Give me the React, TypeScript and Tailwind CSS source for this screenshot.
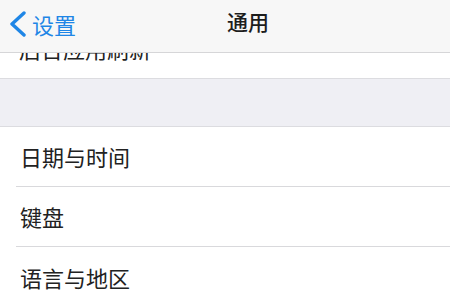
const FONT = { fontFamily: '"Noto Sans CJK SC", "Noto Sans", sans-serif' };

const rows = ["日期与时间", "键盘", "语言与地区"];

export default function App() {
  return (
    <div
      className="relative w-[450px] h-[300px] overflow-hidden bg-[#efeff4] text-[#222]"
      style={FONT}
    >
      {/* nav bar overlays the scrolled list */}
      <div className="absolute inset-x-0 top-0 z-10 h-[53px] bg-[#f7f7f7] border-b border-[#d6d6d8] flex items-center pb-[5px]">
        <div className="flex items-center pl-[8px] text-[#1f86e6]">
          <svg width="20" height="26" viewBox="0 0 20 26" fill="none">
            <polyline
              points="16,2 4,13 16,24"
              stroke="currentColor"
              strokeWidth="3.4"
              strokeLinecap="round"
              strokeLinejoin="round"
            />
          </svg>
          <span className="ml-[4px] text-[22px] leading-none">设置</span>
        </div>
        <div className="absolute left-[227px] top-[11px] text-[21px] font-medium leading-none text-[#1d1d1d]">
          通用
        </div>
      </div>

      <div className="flex flex-col">
        <div className="mt-[19px] h-[60px] bg-white flex items-center pl-[19px] text-[22px] border-b border-[#dcdce0]">
          后台应用刷新
        </div>
        <div className="h-[47px]" />
        <div className="bg-white border-t border-[#dcdce0]">
          {rows.map((r, i) => (
            <div key={r} className="pl-[16px]">
              <div
                className={`h-[60px] flex items-center pl-[4px] text-[22px] ${
                  i < rows.length - 1 ? "border-b border-[#d9d9dc]" : ""
                }`}
              >
                {r}
              </div>
            </div>
          ))}
        </div>
      </div>
    </div>
  );
}
